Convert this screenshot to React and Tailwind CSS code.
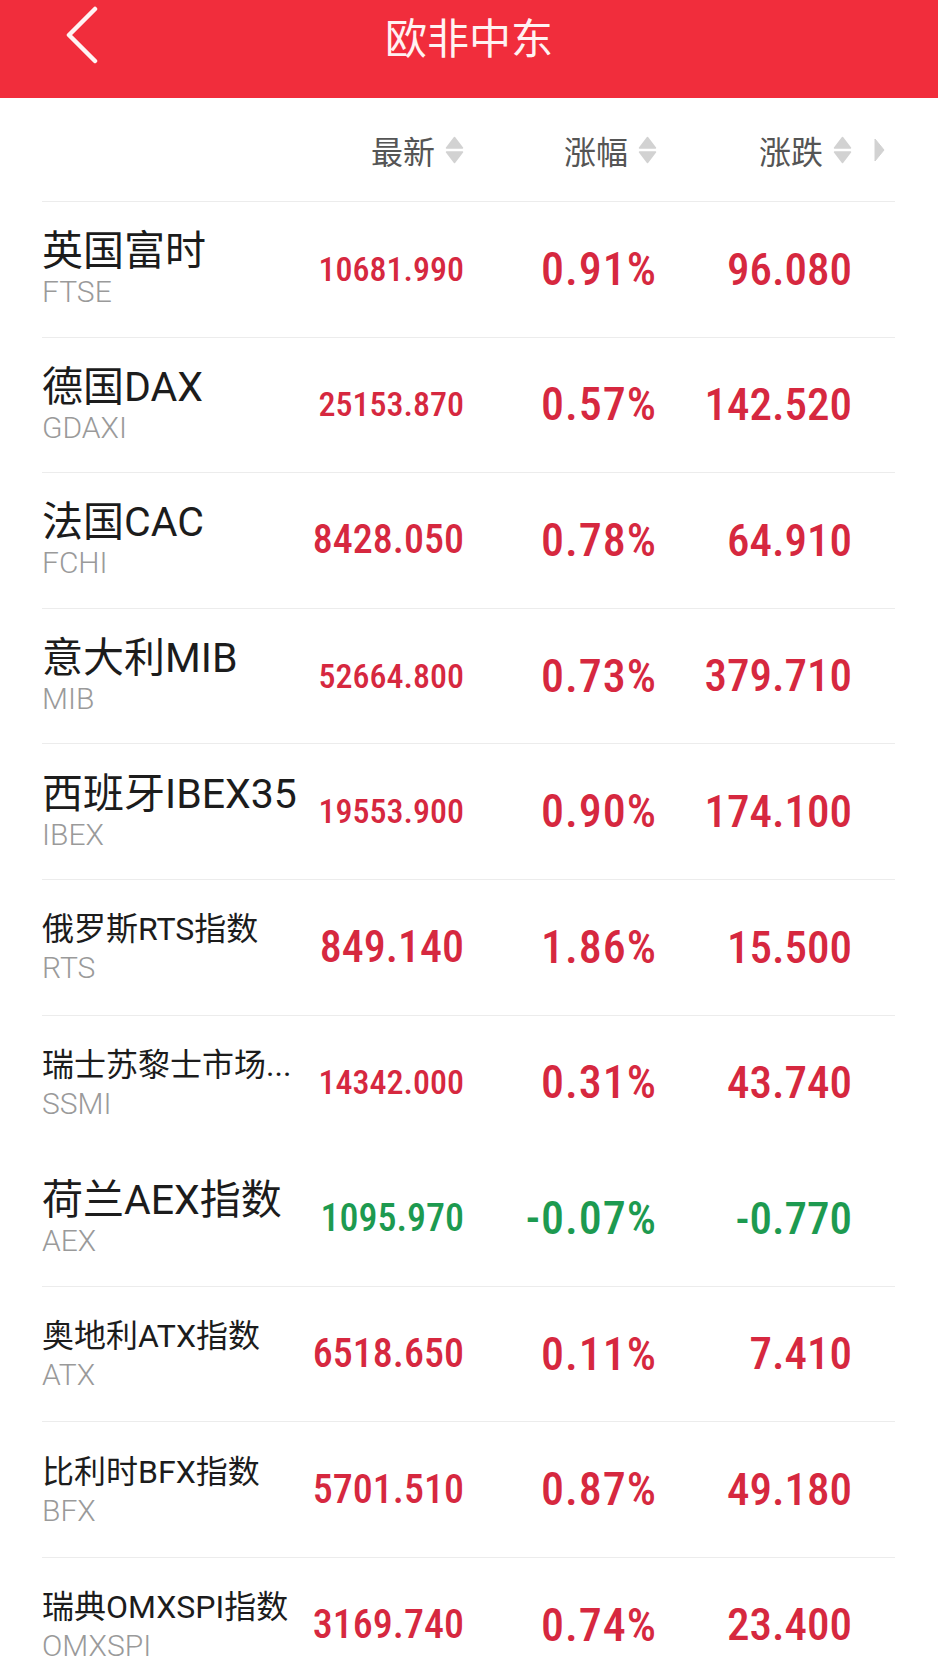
const rows = [
  { name: "英国富时", code: "FTSE", price: "10681.990", pct: "0.91%", chg: "96.080", big: true, priceCls: "text-[34px]", up: true, line: true },
  { name: "德国DAX", code: "GDAXI", price: "25153.870", pct: "0.57%", chg: "142.520", big: true, priceCls: "text-[34px]", up: true, line: true },
  { name: "法国CAC", code: "FCHI", price: "8428.050", pct: "0.78%", chg: "64.910", big: true, priceCls: "text-[40px]", up: true, line: true },
  { name: "意大利MIB", code: "MIB", price: "52664.800", pct: "0.73%", chg: "379.710", big: true, priceCls: "text-[34px]", up: true, line: true },
  { name: "西班牙IBEX35", code: "IBEX", price: "19553.900", pct: "0.90%", chg: "174.100", big: true, priceCls: "text-[34px]", up: true, line: true },
  { name: "俄罗斯RTS指数", code: "RTS", price: "849.140", pct: "1.86%", chg: "15.500", big: false, priceCls: "text-[44px]", up: true, line: true },
  { name: "瑞士苏黎士市场...", code: "SSMI", price: "14342.000", pct: "0.31%", chg: "43.740", big: false, priceCls: "text-[34px]", up: true, line: false },
  { name: "荷兰AEX指数", code: "AEX", price: "1095.970", pct: "-0.07%", chg: "-0.770", big: true, priceCls: "text-[38px]", up: false, line: true },
  { name: "奥地利ATX指数", code: "ATX", price: "6518.650", pct: "0.11%", chg: "7.410", big: false, priceCls: "text-[40px]", up: true, line: true },
  { name: "比利时BFX指数", code: "BFX", price: "5701.510", pct: "0.87%", chg: "49.180", big: false, priceCls: "text-[40px]", up: true, line: true },
  { name: "瑞典OMXSPI指数", code: "OMXSPI", price: "3169.740", pct: "0.74%", chg: "23.400", big: false, priceCls: "text-[40px]", up: true, line: true },
];

function SortIcon() {
  return (
    <svg width="19" height="28" viewBox="0 0 19 28" className="shrink-0">
      <path d="M9.5 1.5 L17.5 12 L1.5 12 Z" fill="#d2d2d2" stroke="#d2d2d2" strokeWidth="1.5" strokeLinejoin="round" />
      <path d="M1.5 16 L17.5 16 L9.5 26.5 Z" fill="#d2d2d2" stroke="#d2d2d2" strokeWidth="1.5" strokeLinejoin="round" />
    </svg>
  );
}

function HeadCell({ label }) {
  return (
    <div className="flex items-center justify-end gap-[10px]">
      <span className="text-[32px] leading-[40px] text-[#555555]">{label}</span>
      <SortIcon />
    </div>
  );
}

function Row({ r }) {
  const color = r.up ? "text-[#d6283f]" : "text-[#1d9a50]";
  return (
    <div
      className={
        r.line
          ? "grid h-[135.6px] grid-cols-[248px_174px_193px_195px_1fr] items-center border-b border-[#ececec]"
          : "grid h-[135.6px] grid-cols-[248px_174px_193px_195px_1fr] items-center border-b border-transparent"
      }
    >
      <div className="flex flex-col whitespace-nowrap">
        <span
          className={
            r.big
              ? "text-[41px] leading-[46px] text-[#1c1c1c]"
              : "text-[32px] leading-[42px] text-[#1c1c1c]"
          }
        >
          {r.name}
        </span>
        <span className="text-[30px] leading-[36px] font-light text-[#9a9a9a] font-['Roboto',sans-serif]">{r.code}</span>
      </div>
      <div className={`text-right font-['Roboto_Condensed',sans-serif] font-medium whitespace-nowrap ${r.priceCls} ${color}`}>
        {r.price}
      </div>
      <div className={`text-right font-['Roboto_Condensed',sans-serif] font-medium text-[46px] tracking-[1px] whitespace-nowrap ${color}`}>
        {r.pct}
      </div>
      <div className={`text-right font-['Roboto_Condensed',sans-serif] font-medium text-[45px] whitespace-nowrap ${color}`}>
        {r.chg}
      </div>
      <div />
    </div>
  );
}

export default function App() {
  return (
    <div className="min-h-screen w-full bg-white font-['Roboto','Noto_Sans_CJK_SC',sans-serif]">
      <header className="grid h-[98px] grid-cols-[1fr_auto_1fr] items-start bg-[#f12d3c]">
        <div className="pl-[64px] pt-[6px]">
          <svg width="36" height="58" viewBox="0 0 36 58">
            <polyline points="31,3 5,29 31,55" fill="none" stroke="#fff4f4" strokeWidth="4.5" strokeLinecap="round" strokeLinejoin="round" />
          </svg>
        </div>
        <h1 className="pt-[11px] text-[42px] leading-[50px] font-normal text-[#fff2f2] font-['Noto_Sans_CJK_SC',sans-serif]">
          欧非中东
        </h1>
        <div />
      </header>

      <main className="ml-[42px] mr-[43px]">
        <div className="grid h-[104px] grid-cols-[248px_174px_193px_195px_1fr] items-center border-b border-[#ececec] font-['Noto_Sans_CJK_SC',sans-serif]">
          <div />
          <HeadCell label="最新" />
          <HeadCell label="涨幅" />
          <HeadCell label="涨跌" />
          <div className="flex items-center pl-[22px]">
            <svg width="11" height="24" viewBox="0 0 11 24">
              <path d="M1 1 L10 12 L1 23 Z" fill="#d2d2d2" stroke="#d2d2d2" strokeWidth="1" strokeLinejoin="round" />
            </svg>
          </div>
        </div>
        {rows.map((r) => (
          <Row key={r.code} r={r} />
        ))}
      </main>
    </div>
  );
}
